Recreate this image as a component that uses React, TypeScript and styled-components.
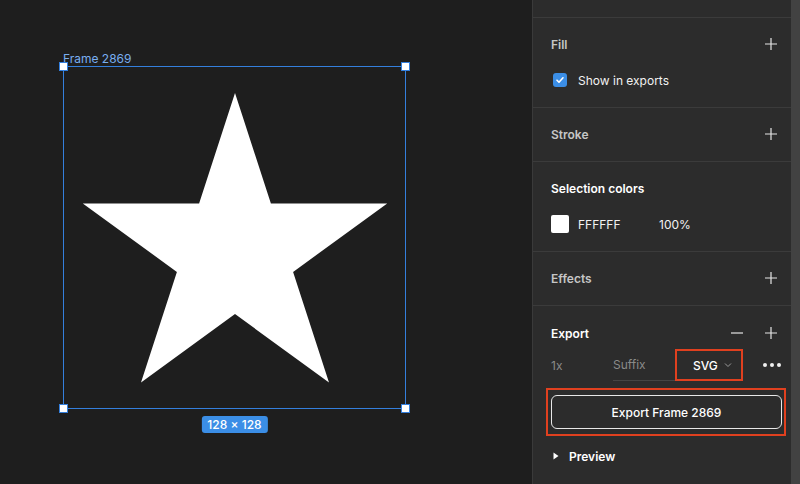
import React from "react";
import styled, { createGlobalStyle } from "styled-components";

const Global = createGlobalStyle`
  html, body { margin: 0; padding: 0; background: #1e1e1e; }
  body { font-family: Inter, "Noto Sans", sans-serif; -webkit-font-smoothing: antialiased; }
  * { box-sizing: border-box; }
`;

const Shell = styled.div`
  display: flex;
  width: 800px;
  height: 484px;
  overflow: hidden;
`;

const Canvas = styled.div`
  position: relative;
  width: 532px;
  flex: none;
  background: #1e1e1e;
`;

const Frame = styled.div`
  position: absolute;
  left: 63px;
  top: 66px;
  width: 343px;
  height: 343px;
  border: 1px solid #347fdc;
`;

const FrameLabel = styled.div`
  position: absolute;
  left: -1px;
  top: -15px;
  font-size: 12px;
  line-height: 14px;
  color: #79aef0;
  white-space: nowrap;
`;

const Handle = styled.div<{ $x: "l" | "r"; $y: "t" | "b" }>`
  position: absolute;
  width: 9px;
  height: 9px;
  background: #fff;
  border: 1px solid #347fdc;
  ${(p) => (p.$x === "l" ? "left: -5px;" : "right: -5px;")}
  ${(p) => (p.$y === "t" ? "top: -5px;" : "bottom: -5px;")}
`;

const StarSvg = styled.svg`
  position: absolute;
  inset: 0;
  width: 341px;
  height: 341px;
`;

const SizeBadge = styled.div`
  position: absolute;
  left: 50%;
  top: calc(100% + 8px);
  transform: translateX(-50%);
  background: #3b8ee6;
  color: #fff;
  font-size: 12px;
  line-height: 17px;
  height: 17px;
  padding: 0 6px;
  border-radius: 3px;
  white-space: nowrap;
  font-weight: 500;
`;

const Panel = styled.div`
  flex: 1;
  display: flex;
  background: #2c2c2c;
  border-left: 1px solid #3a3a3a;
`;

const PanelBody = styled.div`
  flex: 1;
  display: flex;
  flex-direction: column;
`;

const Scrollbar = styled.div`
  width: 9px;
  flex: none;
  background: #424242;
`;

const TopStub = styled.div`
  height: 17px;
`;

const Section = styled.section`
  border-top: 1px solid #3b3b3b;
  padding: 16px 12px 17px 18px;
  display: flex;
  flex-direction: column;
  gap: 16px;
`;

const ExportSection = styled(Section)`
  gap: 0;
  flex: 1;
  padding-top: 17px;
`;

const Header = styled.div`
  height: 20px;
  display: flex;
  align-items: center;
  gap: 18px;
`;

const Title = styled.div<{ $active?: boolean }>`
  flex: 1;
  font-size: 12px;
  font-weight: 600;
  color: ${(p) => (p.$active ? "#ffffff" : "#c6c6c6")};
`;

const IconBtn = styled.span`
  width: 16px;
  height: 16px;
  display: flex;
  align-items: center;
  justify-content: center;
  color: #e6e6e6;
`;

const Row = styled.div`
  height: 20px;
  display: flex;
  align-items: center;
  font-size: 12px;
  color: #f2f2f2;
`;

const Checkbox = styled.span`
  width: 14px;
  height: 14px;
  margin-left: 2px;
  margin-right: 11px;
  border-radius: 3px;
  background: #3b8ee6;
  display: flex;
  align-items: center;
  justify-content: center;
`;

const Swatch = styled.span`
  width: 18px;
  height: 18px;
  border-radius: 2px;
  background: #ffffff;
  margin-right: 9px;
`;

const HexText = styled.span`
  width: 81px;
`;

const ExportRow = styled.div`
  margin-top: 6px;
  height: 32px;
  display: flex;
  align-items: center;
  font-size: 12px;
`;

const Scale = styled.span`
  width: 62px;
  color: #8a8a8a;
`;

const Suffix = styled.span`
  width: 62px;
  height: 32px;
  display: flex;
  align-items: center;
  color: #8a8a8a;
  border-bottom: 1px solid #444;
`;

const FormatSelect = styled.div`
  width: 68px;
  height: 32px;
  border: 2px solid #e0401f;
  display: flex;
  align-items: center;
  padding-left: 16px;
  gap: 6px;
  color: #fff;
  font-weight: 500;
`;

const More = styled.span`
  margin-left: auto;
  margin-right: -2px;
  display: flex;
  gap: 3px;
`;

const Dot = styled.span`
  width: 4px;
  height: 4px;
  border-radius: 50%;
  background: #f0f0f0;
`;

const ButtonFrame = styled.div`
  margin-top: 7px;
  margin-left: -5px;
  margin-right: -7px;
  height: 48px;
  border: 2px solid #e0401f;
  padding: 5px 2px 5px 3px;
`;

const ExportButton = styled.button`
  width: 100%;
  height: 34px;
  background: #2c2c2c;
  border: 1px solid #e8e8e8;
  border-radius: 6px;
  color: #fff;
  font-family: inherit;
  font-size: 12px;
  font-weight: 500;
`;

const PreviewRow = styled.div`
  margin-top: 10px;
  padding-left: 2px;
  height: 20px;
  display: flex;
  align-items: center;
  gap: 10px;
  font-size: 12px;
  font-weight: 600;
  color: #fff;
`;

const Plus = () => (
  <svg width="14" height="14" viewBox="0 0 14 14">
    <path d="M7 1v12M1 7h12" stroke="currentColor" strokeWidth="1.2" fill="none" />
  </svg>
);

const Minus = () => (
  <svg width="14" height="14" viewBox="0 0 14 14">
    <path d="M1 7h12" stroke="currentColor" strokeWidth="1.2" fill="none" />
  </svg>
);

const starPoints =
  "171,26 206.9,136.6 323.2,136.6 229.1,204.9 265,315.4 171,247.1 77,315.4 112.9,204.9 18.8,136.6 135.1,136.6";

export default function App() {
  return (
    <Shell>
      <Global />
      <Canvas>
        <Frame>
          <FrameLabel>Frame 2869</FrameLabel>
          <StarSvg viewBox="0 0 341 341">
            <polygon points={starPoints} fill="#ffffff" />
          </StarSvg>
          <Handle $x="l" $y="t" />
          <Handle $x="r" $y="t" />
          <Handle $x="l" $y="b" />
          <Handle $x="r" $y="b" />
          <SizeBadge>128 × 128</SizeBadge>
        </Frame>
      </Canvas>
      <Panel>
        <PanelBody>
          <TopStub />
          <Section>
            <Header>
              <Title>Fill</Title>
              <IconBtn><Plus /></IconBtn>
            </Header>
            <Row>
              <Checkbox>
                <svg width="10" height="10" viewBox="0 0 10 10">
                  <path d="M2 5.2l2 2 4-4.4" stroke="#fff" strokeWidth="1.6" fill="none" strokeLinecap="round" strokeLinejoin="round" />
                </svg>
              </Checkbox>
              Show in exports
            </Row>
          </Section>
          <Section>
            <Header>
              <Title>Stroke</Title>
              <IconBtn><Plus /></IconBtn>
            </Header>
          </Section>
          <Section>
            <Header>
              <Title $active>Selection colors</Title>
            </Header>
            <Row>
              <Swatch />
              <HexText>FFFFFF</HexText>
              <span>100%</span>
            </Row>
          </Section>
          <Section>
            <Header>
              <Title>Effects</Title>
              <IconBtn><Plus /></IconBtn>
            </Header>
          </Section>
          <ExportSection>
            <Header>
              <Title $active>Export</Title>
              <IconBtn><Minus /></IconBtn>
              <IconBtn><Plus /></IconBtn>
            </Header>
            <ExportRow>
              <Scale>1x</Scale>
              <Suffix>Suffix</Suffix>
              <FormatSelect>
                SVG
                <svg width="8" height="6" viewBox="0 0 8 6">
                  <path d="M1 1.5l3 3 3-3" stroke="#9a9a9a" strokeWidth="1" fill="none" />
                </svg>
              </FormatSelect>
              <More>
                <Dot />
                <Dot />
                <Dot />
              </More>
            </ExportRow>
            <ButtonFrame>
              <ExportButton>Export Frame 2869</ExportButton>
            </ButtonFrame>
            <PreviewRow>
              <svg width="6" height="8" viewBox="0 0 6 8">
                <path d="M0.5 0.5L5.5 4L0.5 7.5Z" fill="#fff" />
              </svg>
              Preview
            </PreviewRow>
          </ExportSection>
        </PanelBody>
        <Scrollbar />
      </Panel>
    </Shell>
  );
}
